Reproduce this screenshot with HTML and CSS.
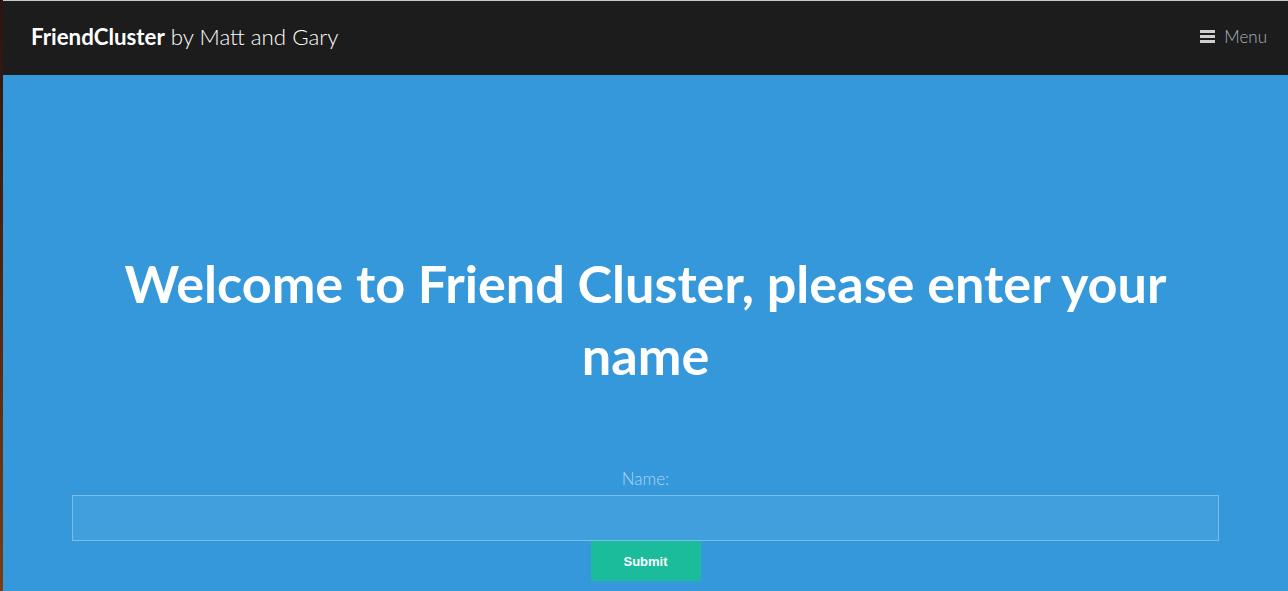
FILE: index.html
```html
<!DOCTYPE html>
<html lang="en">
<head>
  <meta charset="UTF-8" />
  <meta name="viewport" content="width=device-width, initial-scale=1.0"/>
  <title>FriendCluster</title>
  <link rel="stylesheet" href="styles.css">
</head>
<body>

  <div class="page">
    <header class="topbar">
      <h1 class="brand"><strong>FriendCluster</strong> by Matt and Gary</h1>
      <a class="menu-toggle" href="#menu">
        <span class="bars"><i></i><i></i><i></i></span>
        Menu
      </a>
    </header>

    <main class="banner">
      <h2>Welcome to Friend Cluster, please enter your name</h2>

      <form class="name-form" onsubmit="return false;">
        <label for="name">Name:</label>
        <input type="text" id="name" name="name" />
        <button type="submit">Submit</button>
      </form>
    </main>
  </div>

</body>
</html>
```

FILE: styles.css
```css
* { box-sizing: border-box; }

html, body {
  height: 100%;
}

body {
  margin: 0;
  background: linear-gradient(to bottom, #2a140f, #4a2210 40%, #7a3c14);
  font-family: Lato, 'Noto Sans', sans-serif;
  overflow: hidden;
}

.page {
  margin-left: 3px;
  min-height: 100%;
  background: #3498db;
  display: flex;
  flex-direction: column;
}

.topbar {
  height: 75px;
  background: #1c1c1c;
  border-top: 1px solid #c9c9c9;
  display: flex;
  justify-content: space-between;
  align-items: center;
  padding: 0 21px 4px 28px;
}

.brand {
  margin: 0;
  font-size: 22.3px;
  font-weight: 300;
  color: #fff;
}

.brand strong {
  font-weight: 700;
}

.menu-toggle {
  display: flex;
  align-items: center;
  gap: 9px;
  color: #aab4bf;
  font-size: 17px;
  font-weight: 300;
  text-decoration: none;
}

.bars {
  display: flex;
  flex-direction: column;
  gap: 2px;
  width: 15px;
  margin-top: 1px;
}

.bars i {
  display: block;
  height: 3px;
  background: #cfcfcf;
}

.banner {
  flex: 1;
  padding: 172px 69px 0 69px;
  text-align: center;
  color: #fff;
}

.banner h2 {
  margin: 0 40px;
  font-size: 52.2px;
  line-height: 72px;
  font-weight: 700;
}

.name-form {
  margin-top: 75px;
  display: flex;
  flex-direction: column;
  align-items: center;
}

.name-form label {
  font-size: 17px;
  line-height: 24px;
  font-weight: 300;
  color: rgba(255,255,255,0.6);
  margin-top: 1px;
  margin-bottom: 4px;
}

.name-form input {
  width: 100%;
  height: 46px;
  background: rgba(255,255,255,0.07);
  border: 1px solid rgba(255,255,255,0.3);
  color: #fff;
  font-size: 16px;
  padding: 0 12px;
  outline: none;
}

.name-form button {
  width: 110px;
  height: 40px;
  border: none;
  background: #1abc9c;
  color: #fff;
  font-family: 'Liberation Sans', Arial, sans-serif;
  font-size: 13px;
  font-weight: 700;
  cursor: pointer;
}
```
